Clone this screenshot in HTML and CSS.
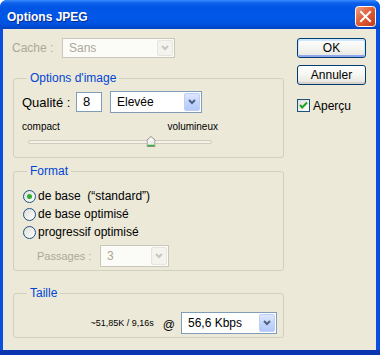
FILE: index.html
```html
<!DOCTYPE html>
<html lang="fr">
<head>
<meta charset="UTF-8">
<title>Options JPEG</title>
<link rel="stylesheet" href="styles.css">
</head>
<body>
<div class="window">
    <div class="titlebar">
        <span class="title">Options JPEG</span>
        <span class="close">
            <svg width="21" height="21" viewBox="0 0 21 21">
                <defs>
                    <linearGradient id="red" x1="0" y1="0" x2="1" y2="1">
                        <stop offset="0" stop-color="#f3a58b"/>
                        <stop offset="0.45" stop-color="#e0603a"/>
                        <stop offset="1" stop-color="#c2381a"/>
                    </linearGradient>
                </defs>
                <rect x="0.5" y="0.5" width="20" height="20" rx="3" fill="url(#red)" stroke="#fff"/>
                <path d="M6 6 L15 15 M15 6 L6 15" stroke="#fff" stroke-width="2" stroke-linecap="square"/>
            </svg>
        </span>
    </div>
    <div class="client">
        <div class="main">
            <div class="cache-row">
                <span class="cache-label">Cache :</span>
                <div class="combo combo-disabled cache-combo">
                    <span class="combo-text">Sans</span>
                    <span class="combo-btn"><svg width="8" height="6" viewBox="0 0 8 6"><polyline points="1,1 4,4 7,1" fill="none" stroke-width="2"/></svg></span>
                </div>
            </div>

            <fieldset class="group group-image">
                <legend>Options d'image</legend>
                <div class="quality-row">
                    <span class="quality-label">Qualité :</span>
                    <div class="textbox">8</div>
                    <div class="combo quality-combo">
                        <span class="combo-text">Elevée</span>
                        <span class="combo-btn"><svg width="8" height="6" viewBox="0 0 8 6"><polyline points="1,1 4,4 7,1" fill="none" stroke-width="2"/></svg></span>
                    </div>
                </div>
                <div class="slider-labels"><span>compact</span><span>volumineux</span></div>
                <div class="slider">
                    <div class="track"></div>
                    <span class="thumb" style="left: 66.7%">
                        <svg width="9" height="11" viewBox="0 0 9 11">
                            <defs>
                                <linearGradient id="thumbfill" x1="0" y1="0" x2="0" y2="1">
                                    <stop offset="0" stop-color="#ffffff"/>
                                    <stop offset="1" stop-color="#e4e3dc"/>
                                </linearGradient>
                            </defs>
                            <path d="M0.5 4 L4.5 0.5 L8.5 4 L8.5 10.5 L0.5 10.5 Z" fill="url(#thumbfill)" stroke="#8e8f8f"/>
                            <path d="M1 9.5 L8 9.5" stroke="#3cb43c" stroke-width="1.5"/>
                        </svg>
                    </span>
                </div>
            </fieldset>

            <fieldset class="group group-format">
                <legend>Format</legend>
                <label class="radio-row">
                    <svg class="radio" width="13" height="13" viewBox="0 0 13 13">
                        <defs>
                            <linearGradient id="boxfill" x1="0" y1="0" x2="1" y2="1">
                                <stop offset="0" stop-color="#dcdcd7"/>
                                <stop offset="1" stop-color="#ffffff"/>
                            </linearGradient>
                        </defs>
                        <circle cx="6.5" cy="6.5" r="6" fill="url(#boxfill)" stroke="#1c5180"/>
                        <circle cx="6.5" cy="6.5" r="2.5" fill="#2fae2f"/>
                    </svg>
                    de base&nbsp; (“standard”)
                </label>
                <label class="radio-row">
                    <svg class="radio" width="13" height="13" viewBox="0 0 13 13"><circle cx="6.5" cy="6.5" r="6" fill="url(#boxfill)" stroke="#1c5180"/></svg>
                    de base optimisé
                </label>
                <label class="radio-row">
                    <svg class="radio" width="13" height="13" viewBox="0 0 13 13"><circle cx="6.5" cy="6.5" r="6" fill="url(#boxfill)" stroke="#1c5180"/></svg>
                    progressif optimisé
                </label>
                <div class="passes-row">
                    <span class="passes-label">Passages :</span>
                    <div class="combo combo-disabled passes-combo">
                        <span class="combo-text">3</span>
                        <span class="combo-btn"><svg width="8" height="6" viewBox="0 0 8 6"><polyline points="1,1 4,4 7,1" fill="none" stroke-width="2"/></svg></span>
                    </div>
                </div>
            </fieldset>

            <fieldset class="group group-size">
                <legend>Taille</legend>
                <div class="size-row">
                    <span class="size-info">~51,85K / 9,16s</span>
                    <span class="at">@</span>
                    <div class="combo speed-combo">
                        <span class="combo-text">56,6 Kbps</span>
                        <span class="combo-btn"><svg width="8" height="6" viewBox="0 0 8 6"><polyline points="1,1 4,4 7,1" fill="none" stroke-width="2"/></svg></span>
                    </div>
                </div>
            </fieldset>
        </div>

        <div class="side">
            <button class="btn btn-default">OK</button>
            <button class="btn btn-cancel">Annuler</button>
            <label class="check-row">
                <svg class="checkbox" width="13" height="13" viewBox="0 0 13 13">
                    <rect x="0.5" y="0.5" width="12" height="12" fill="url(#boxfill)" stroke="#1c5180"/>
                    <path d="M3 6 L5.2 8.5 L10 3.5" fill="none" stroke="#21a121" stroke-width="2"/>
                </svg>
                Aperçu
            </label>
        </div>
    </div>
</div>
</body>
</html>
```

FILE: styles.css
```css
body {
    margin: 0;
    background-color: #fff;
    font-family: "Liberation Sans", Arial, sans-serif;
    color: #000;
}

.window {
    width: 380px;
    height: 355px;
    display: flex;
    flex-direction: column;
    background-color: #0a4de0;
    border-radius: 7px 7px 0 0;
    box-shadow: inset 0 -5px 0 #0a36b2;
    overflow: hidden;
}

.titlebar {
    flex: none;
    height: 29px;
    box-sizing: border-box;
    padding: 4px 4px 0 7px;
    display: flex;
    align-items: center;
    justify-content: space-between;
    background: linear-gradient(to bottom, #3a8cff 0, #0d60ea 3px, #0055e5 8px, #0157e8 18px, #0052df 24px, #0043c4 29px);
}

.title {
    color: #fff;
    font-size: 12px;
    font-weight: bold;
    text-shadow: 1px 1px 0 #0b2b8c;
}

.close {
    display: flex;
}

.client {
    flex: 1;
    margin: 0 4px 5px 3px;
    padding: 9px 10px 0 9px;
    display: flex;
    gap: 13px;
    background-color: #ece9d8;
}

.main {
    width: 272px;
}

.side {
    width: 69px;
    display: flex;
    flex-direction: column;
}

/* combo boxes */
.combo {
    display: flex;
    box-sizing: border-box;
    height: 22px;
    padding: 1px;
    border: 1px solid #7f9db9;
    background-color: #fff;
    font-size: 12px;
}

.combo-text {
    flex: 1;
    display: flex;
    align-items: center;
    padding-left: 5px;
}

.combo-btn {
    width: 16px;
    box-sizing: border-box;
    display: flex;
    align-items: center;
    justify-content: center;
    border: 1px solid #bccff9;
    border-radius: 2px;
    background: linear-gradient(to bottom, #dde7fe, #c0d2fb 60%, #b3c9f8);
}

.combo-btn svg {
    stroke: #4d6185;
}

.combo-disabled {
    border-color: #c9c7ba;
    background-color: #fbfbf8;
    color: #aca899;
}

.combo-disabled .combo-btn {
    border-color: #e8e6dc;
    background: #f4f3ee;
}

.combo-disabled .combo-btn svg {
    stroke: #c9c7ba;
}

.cache-row {
    height: 20px;
    display: flex;
    align-items: center;
}

.cache-label {
    width: 50px;
    font-size: 12px;
    color: #aca899;
}

.cache-combo {
    width: 113px;
    height: 20px;
}

/* group boxes */
.group {
    margin: 0 0 0 1px;
    padding: 0 8px 0 8px;
    border: 1px solid #d0d0bf;
    border-radius: 3px;
}

.group legend {
    margin-left: 5px;
    padding: 0 3px;
    font-size: 12px;
    line-height: 14px;
    color: #0046d5;
}

.group-image {
    margin-top: 13px;
    padding-top: 6px;
    padding-bottom: 10px;
}

.quality-row {
    height: 22px;
    display: flex;
    align-items: center;
}

.quality-label {
    width: 54px;
    font-size: 13px;
}

.textbox {
    width: 26px;
    height: 20px;
    box-sizing: border-box;
    margin-right: 8px;
    padding-left: 6px;
    border: 1px solid #7f9db9;
    background-color: #fff;
    font-size: 13px;
    line-height: 18px;
}

.quality-combo {
    width: 92px;
}

.slider-labels {
    width: 196px;
    margin-top: 8px;
    display: flex;
    justify-content: space-between;
    font-size: 10px;
    line-height: 12px;
}

.slider {
    position: relative;
    width: 184px;
    height: 12px;
    margin: 2px 6px 0;
}

.track {
    position: absolute;
    left: 0;
    right: 0;
    top: 5px;
    height: 2px;
    border: 1px solid #cfccbd;
    border-radius: 2px;
    background-color: #f3f2ea;
}

.thumb {
    position: absolute;
    top: 1px;
    display: flex;
    transform: translateX(-50%);
}

.group-format {
    margin-top: 6px;
    padding-top: 9px;
    padding-bottom: 3px;
}

.radio-row {
    height: 18px;
    display: flex;
    align-items: center;
    gap: 2px;
    padding-left: 1px;
    font-size: 12px;
}

.passes-row {
    margin-top: 4px;
    display: flex;
    align-items: center;
}

.passes-label {
    width: 63px;
    padding-left: 15px;
    font-size: 11px;
    color: #aca899;
}

.passes-combo {
    width: 69px;
}

.group-size {
    margin-top: 15px;
    padding-top: 12px;
    padding-bottom: 3px;
    padding-right: 6px;
}

.size-row {
    display: flex;
    align-items: center;
    justify-content: flex-end;
}

.size-info {
    font-size: 9px;
    margin-right: 9px;
}

.at {
    font-size: 12px;
    margin-right: 6px;
    padding-top: 3px;
}

.speed-combo {
    width: 96px;
}

/* buttons */
.btn {
    height: 20px;
    padding: 0;
    border: 1px solid #003c74;
    border-radius: 3px;
    background: linear-gradient(to bottom, #ffffff, #f5f5f1 50%, #e6e5de);
    font-family: "Liberation Sans", Arial, sans-serif;
    font-size: 12px;
    color: #000;
}

.btn-default {
    box-shadow: inset 0 1px 0 1px #cee7ff, inset 0 -1px 0 1px #8fa7ef;
}

.btn-cancel {
    margin-top: 7px;
    box-shadow: inset 0 -2px 0 #d8d2c6;
}

.check-row {
    margin-top: 14px;
    height: 13px;
    display: flex;
    align-items: center;
    gap: 3px;
    font-size: 12px;
}
```
